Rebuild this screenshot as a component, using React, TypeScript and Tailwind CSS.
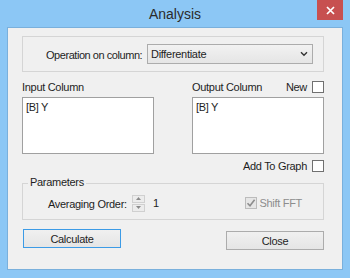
import { useState } from "react";

const font = "font-['Liberation_Sans',Arial,sans-serif]";

function CheckBox({ checked = false, disabled = false }: { checked?: boolean; disabled?: boolean }) {
  return (
    <div
      className={`w-[12px] h-[12px] shrink-0 border flex items-center justify-center ${
        disabled ? "border-[#bcbcbc] bg-[#e6e6e6]" : "border-[#707070] bg-white"
      }`}
    >
      {checked && (
        <svg width="10" height="10" viewBox="0 0 10 10">
          <path d="M1.5 5.2 L4 7.8 L8.6 1.8" fill="none" stroke={disabled ? "#8d8d8d" : "#333"} strokeWidth="1.6" />
        </svg>
      )}
    </div>
  );
}

function ListBox({ items }: { items: string[] }) {
  return (
    <div className="w-[132px] h-[57px] bg-white border border-[#a0a0a0] px-[3px] py-[2px]">
      {items.map((it) => (
        <div key={it} className="leading-[14px] text-[#1e1e1e]">
          {it}
        </div>
      ))}
    </div>
  );
}

export default function App() {
  const [op] = useState("Differentiate");

  return (
    <div className={`w-[350px] h-[278px] bg-[#8cc7f5] flex flex-col ${font} text-[#1e1e1e]`}>
      {/* title bar */}
      <div className="h-[27px] flex items-start relative">
        <div className="flex-1 text-center text-[14px] leading-[28px] text-[#2b2b2b]">Analysis</div>
        <div className="absolute right-[7px] top-0 w-[26px] h-[20px] bg-[#c75050] flex items-center justify-center">
          <svg width="9" height="9" viewBox="0 0 9 9">
            <path d="M1 1 L8 8 M8 1 L1 8" stroke="white" strokeWidth="1.7" />
          </svg>
        </div>
      </div>

      {/* client area */}
      <div className="mx-[7px] mb-[8px] flex-1 bg-[#f0f0f0] border border-[#7ab0dc] flex flex-col pl-[14px] pr-[18px] text-[11px] tracking-[-0.3px] whitespace-nowrap">
        {/* operation group */}
        <div className="mt-[8px] h-[36px] border border-[#d5d5d5] flex items-start pl-[23px]">
          <span className="mt-[10px] w-[101px] tracking-[-0.45px]">Operation on column:</span>
          <div className="mt-[7px] w-[166px] h-[20px] border border-[#acacac] bg-gradient-to-b from-[#f2f2f2] to-[#e5e5e5] flex items-center pl-[3px] pr-[4px]">
            <span className="flex-1">{op}</span>
            <svg width="8" height="6" viewBox="0 0 8 6">
              <path d="M1 1.2 L4 4.2 L7 1.2" fill="none" stroke="#333" strokeWidth="1.4" />
            </svg>
          </div>
        </div>

        {/* column labels */}
        <div className="mt-[8px] h-[14px] flex items-center">
          <span className="w-[170px]">Input Column</span>
          <span className="flex-1">Output Column</span>
          <span className="mr-[5px]">New</span>
          <CheckBox />
        </div>

        {/* lists */}
        <div className="mt-[3px] flex justify-between">
          <ListBox items={["[B] Y"]} />
          <ListBox items={["[B] Y"]} />
        </div>

        {/* add to graph */}
        <div className="mt-[6px] h-[12px] flex items-center justify-end">
          <span className="mr-[5px]">Add To Graph</span>
          <CheckBox />
        </div>

        {/* parameters group */}
        <div className="mt-[3px] relative h-[45px] pt-[8px]">
          <div className="h-full border border-[#d5d5d5] flex items-center pl-[25px] pr-[21px]">
            <span className="mt-[5px] w-[84px]">Averaging Order:</span>
            <div className="mt-[3px] flex flex-col gap-[1px]">
              <div className="w-[13px] h-[8px] border border-[#d0d0d0] bg-[#ececec] flex items-center justify-center">
                <svg width="5" height="3" viewBox="0 0 5 3"><path d="M0 3 L2.5 0 L5 3 Z" fill="#8a8a8a" /></svg>
              </div>
              <div className="w-[13px] h-[8px] border border-[#d0d0d0] bg-[#ececec] flex items-center justify-center">
                <svg width="5" height="3" viewBox="0 0 5 3"><path d="M0 0 L2.5 3 L5 0 Z" fill="#8a8a8a" /></svg>
              </div>
            </div>
            <span className="ml-[8px] mt-[3px]">1</span>
            <div className="ml-auto mt-[3px] flex items-center text-[#8d8d8d]">
              <CheckBox checked disabled />
              <span className="ml-[2px]">Shift FFT</span>
            </div>
          </div>
          <span className="absolute left-[6px] top-[1px] bg-[#f0f0f0] px-[2px] leading-[13px]">Parameters</span>
        </div>

        {/* buttons */}
        <div className="mt-[9px] flex justify-between items-start">
          <button className="ml-[1px] w-[98px] h-[19px] border border-[#3c9be6] bg-gradient-to-b from-[#f0f0f0] to-[#e5e5e5] leading-[16px]">
            Calculate
          </button>
          <button className="mt-[2px] w-[98px] h-[19px] border border-[#acacac] bg-gradient-to-b from-[#f0f0f0] to-[#e5e5e5] leading-[16px]">
            Close
          </button>
        </div>
      </div>
    </div>
  );
}
